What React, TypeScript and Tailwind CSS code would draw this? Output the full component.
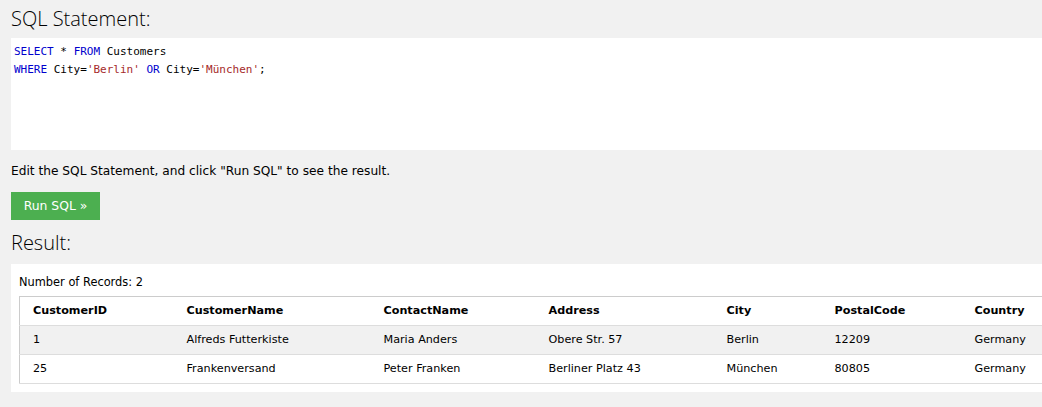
import React from "react";

const rows = [
  ["1", "Alfreds Futterkiste", "Maria Anders", "Obere Str. 57", "Berlin", "12209", "Germany"],
  ["25", "Frankenversand", "Peter Franken", "Berliner Platz 43", "München", "80805", "Germany"],
];
const heads = ["CustomerID", "CustomerName", "ContactName", "Address", "City", "PostalCode", "Country"];
const widths = ["w-[154px]", "w-[197px]", "w-[165px]", "w-[178px]", "w-[108px]", "w-[140px]", "w-[120px]"];

export default function App() {
  return (
    <div className="w-[1042px] h-[407px] overflow-hidden bg-[#f1f1f1] text-black" style={{ fontFamily: "Verdana, 'DejaVu Sans', sans-serif" }}>
      <div className="pl-[11px] w-[1100px]">
        <h2 className="pt-[4px] h-[38px] text-[20px] leading-[30px] font-light text-[#000]" style={{ fontFamily: "'Segoe UI', 'Open Sans', sans-serif" }}>
          SQL Statement:
        </h2>
        <div className="bg-white h-[112px] pt-[5px] pl-[3px] text-[11px] leading-[18px]" style={{ fontFamily: "'DejaVu Sans Mono', monospace" }}>
          <div>
            <span className="text-[#0000cd]">SELECT</span> * <span className="text-[#0000cd]">FROM</span> Customers
          </div>
          <div>
            <span className="text-[#0000cd]">WHERE</span> City=<span className="text-[#a52a2a]">'Berlin'</span> <span className="text-[#0000cd]">OR</span> City=<span className="text-[#a52a2a]">'München'</span>;
          </div>
        </div>
        <p className="mt-[12px] text-[12.2px] leading-[18px]">Edit the SQL Statement, and click "Run SQL" to see the result.</p>
        <div className="mt-[12px]">
          <button className="bg-[#4CAF50] text-white text-[12.4px] h-[28px] w-[89px] leading-[28px] text-center">Run SQL »</button>
        </div>
        <h2 className="h-[44px] pt-[9px] text-[20px] leading-[28px] font-light" style={{ fontFamily: "'Segoe UI', 'Open Sans', sans-serif" }}>
          Result:
        </h2>
        <div className="bg-white h-[128px] pl-[8px] pt-[10px]">
          <div className="text-[11.4px] leading-[16px]">Number of Records: 2</div>
          <table className="mt-[6px] border border-[#cccccc] border-collapse text-[11.2px]">
            <thead>
              <tr className="h-[29px] border-b border-[#dddddd]">
                {heads.map((h, i) => (
                  <th key={h} className={`${widths[i]} text-left font-bold pl-[13px] pr-0`}>{h}</th>
                ))}
              </tr>
            </thead>
            <tbody>
              {rows.map((r, ri) => (
                <tr key={ri} className={`h-[29px] border-b border-[#dddddd] ${ri === 0 ? "bg-[#f1f1f1]" : "bg-white"}`}>
                  {r.map((c, i) => (
                    <td key={i} className={`${widths[i]} pl-[13px]`}>{c}</td>
                  ))}
                </tr>
              ))}
            </tbody>
          </table>
        </div>
      </div>
    </div>
  );
}
